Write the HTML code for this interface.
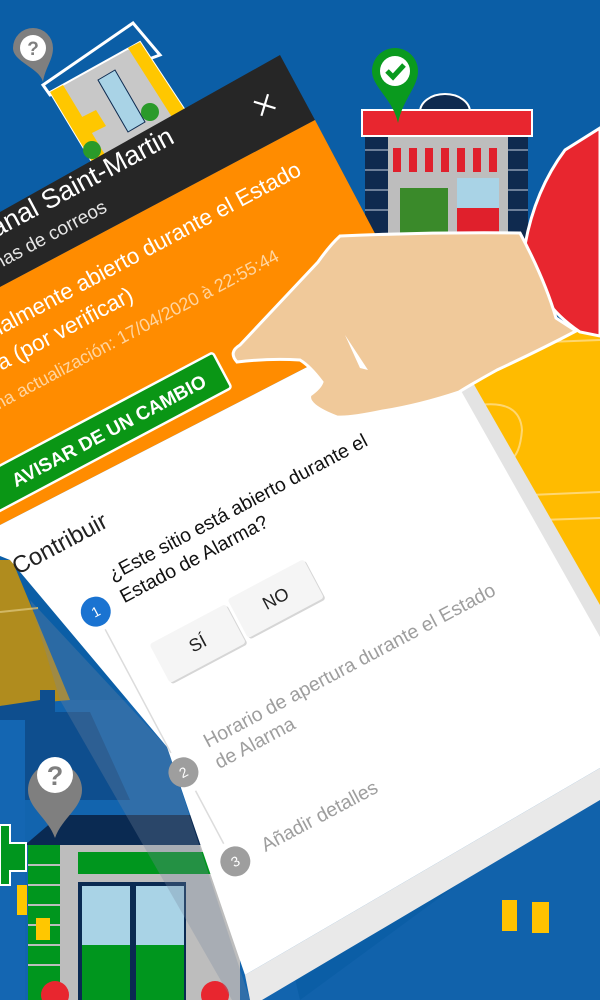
<!DOCTYPE html>
<html><head><meta charset="utf-8"><style>
html,body{margin:0;padding:0;background:#0b5ea6;}
svg{display:block;font-family:"Liberation Sans",Arial,sans-serif;}
</style></head><body>
<svg width="600" height="1000" viewBox="0 0 600 1000" xmlns="http://www.w3.org/2000/svg">
<rect width="600" height="1000" fill="#0b5ea6"/>
<polygon points="0,700 230,700 300,1000 0,1000" fill="#1264ae"/>
<polygon points="300,1000 600,780 600,1000" fill="#1162ab"/>
<polygon points="0,560 12,560 70,700 0,706" fill="#b08c1e"/>
<polyline points="0,612 38,608" stroke="#d2b865" stroke-width="2" fill="none"/>
<polygon points="0,706 40,700 40,690 55,690 55,712 90,712 130,800 0,800" fill="#0e4e8e"/>
<polygon points="0,720 25,720 25,1000 0,1000" fill="#1466b2"/>
<polygon points="430,340 600,322 600,660 430,340" fill="#ffbb00"/>
<polyline points="470,345 600,340" stroke="#ffd770" stroke-width="2" fill="none"/>
<polyline points="530,495 600,492" stroke="#ffd770" stroke-width="2" fill="none"/>
<polyline points="540,520 600,518" stroke="#ffd770" stroke-width="2" fill="none"/>
<path d="M480,405 Q520,400 522,430 Q520,455 510,460" stroke="#ffd770" stroke-width="2" fill="none"/>
<rect x="502" y="900" width="15" height="31" fill="#ffc200"/>
<rect x="532" y="902" width="17" height="31" fill="#ffc200"/>
<!-- post office -->
<polygon points="43,85 133,23 160,55 50,95" fill="#0b5ea6" stroke="#fff" stroke-width="3"/>
<polygon points="50,92 140,42 190,118 100,175" fill="#c8c8c8" stroke="#fff" stroke-width="2"/>
<polygon points="50,92 63,85 113,168 100,175" fill="#ffc700"/>
<polygon points="128,48 140,42 190,118 177,125" fill="#ffc700"/>
<polygon points="98,80 115,70 145,122 128,132" fill="#a9d3e6" stroke="#0d2a50" stroke-width="1"/>
<polygon points="80,118 96,110 106,126 90,134" fill="#ffc700"/>
<circle cx="92" cy="150" r="9" fill="#2a9a2a"/><circle cx="150" cy="112" r="9" fill="#2a9a2a"/>
<path d="M33,28 a20,20 0 0 1 20,20 c0,12 -8,20 -10,34 c-3,-14 -30,-20 -30,-34 a20,20 0 0 1 20,-20z" fill="#7f7f7f"/>
<circle cx="33" cy="48" r="13" fill="#fff"/>
<text x="33" y="55" font-size="19" font-weight="bold" fill="#7f7f7f" text-anchor="middle">?</text>
<!-- shop -->
<path d="M420,112 a25,18 0 0 1 50,0z" fill="#0f2a4f" stroke="#fff" stroke-width="2"/>
<rect x="365" y="134" width="163" height="110" fill="#0f2a4f"/>
<g stroke="#6d7f99" stroke-width="2"><line x1="365" y1="150" x2="388" y2="150"/><line x1="365" y1="170" x2="388" y2="170"/><line x1="365" y1="190" x2="388" y2="190"/><line x1="365" y1="210" x2="388" y2="210"/><line x1="508" y1="150" x2="528" y2="150"/><line x1="508" y1="170" x2="528" y2="170"/><line x1="508" y1="190" x2="528" y2="190"/><line x1="508" y1="210" x2="528" y2="210"/></g>
<rect x="388" y="134" width="120" height="110" fill="#bdbdbd"/>
<g fill="#e0202c"><rect x="393" y="148" width="8" height="24"/><rect x="409" y="148" width="8" height="24"/><rect x="425" y="148" width="8" height="24"/><rect x="441" y="148" width="8" height="24"/><rect x="457" y="148" width="8" height="24"/><rect x="473" y="148" width="8" height="24"/><rect x="489" y="148" width="8" height="24"/></g>
<rect x="400" y="188" width="48" height="50" fill="#3a8a2a"/>
<rect x="457" y="178" width="42" height="62" fill="#e0202c"/>
<rect x="457" y="178" width="42" height="30" fill="#a9d3e6"/>
<rect x="362" y="110" width="170" height="26" fill="#e8262f" stroke="#fff" stroke-width="2"/>
<path d="M395,48 a23,23 0 0 1 23,23 c0,16 -15,28 -20,52 c-5,-24 -26,-36 -26,-52 a23,23 0 0 1 23,-23z" fill="#0a9a1e"/>
<circle cx="395" cy="71" r="15" fill="#fff"/>
<path d="M387,71 l6,6 l11,-12" stroke="#0a9a1e" stroke-width="5" fill="none"/>
<path d="M600,128 L565,150 Q535,190 525,245 Q532,300 580,332 L600,336 Z" fill="#e8262f" stroke="#fff" stroke-width="3"/>
<!-- pharmacy -->
<polygon points="25,845 60,815 220,815 240,845" fill="#0a2a52"/>
<rect x="28" y="845" width="212" height="160" fill="#bdbdbd"/>
<rect x="28" y="845" width="32" height="160" fill="#00961e"/>
<g stroke="#bdbdbd" stroke-width="2"><line x1="28" y1="865" x2="60" y2="865"/><line x1="28" y1="885" x2="60" y2="885"/><line x1="28" y1="905" x2="60" y2="905"/><line x1="28" y1="925" x2="60" y2="925"/><line x1="28" y1="945" x2="60" y2="945"/><line x1="28" y1="965" x2="60" y2="965"/></g>
<rect x="78" y="852" width="160" height="22" fill="#00961e"/>
<rect x="78" y="882" width="108" height="120" fill="#0a2a52"/>
<rect x="82" y="886" width="48" height="116" fill="#a9d3e6"/><rect x="136" y="886" width="48" height="116" fill="#a9d3e6"/>
<rect x="82" y="945" width="48" height="57" fill="#00961e"/><rect x="136" y="945" width="48" height="57" fill="#00961e"/>
<rect x="36" y="918" width="14" height="22" fill="#ffc700"/>
<rect x="17" y="885" width="10" height="30" fill="#ffc700"/>
<path d="M0,825 h10 v18 h16 v28 h-16 v14 h-10z" fill="#00961e" stroke="#fff" stroke-width="2"/>
<circle cx="55" cy="995" r="14" fill="#e8262f"/><circle cx="215" cy="995" r="14" fill="#e8262f"/>
<path d="M55,763 a27,27 0 0 1 27,27 c0,18 -20,28 -27,48 c-7,-20 -27,-30 -27,-48 a27,27 0 0 1 27,-27z" fill="#7f7f7f"/>
<circle cx="55" cy="775" r="18" fill="#fff"/>
<text x="55" y="785" font-size="27" font-weight="bold" fill="#7f7f7f" text-anchor="middle">?</text>
<!-- card -->
<polygon points="245,975 600,768 600,800 262,1000 250,1000" fill="#e9e9e9"/>
<polygon points="416,311 432,311 600,605 600,640" fill="#e3e3e3"/>
<polygon points="30,600 167,747 250,1000 232,1000 60,700" fill="rgba(120,135,160,0.3)"/>
<polygon points="0,212 280,55 315,120 0,287" fill="#262626"/>
<polygon points="0,287 315,120 416,311 0,525" fill="#ff8c00"/>
<polygon points="0,525 416,311 600,637 600,768 245,975 167,747 10,560 0,556" fill="#ffffff"/>
<g transform="translate(280,55) rotate(-28)">
  <text x="-133" y="28" font-size="27" fill="#fff" text-anchor="end">Canal Saint-Martin</text>
  <text x="-225" y="57" font-size="19" fill="#e6e6e6" text-anchor="end">Oficinas de correos</text>
  <g stroke="#fff" stroke-width="2.2"><line x1="-45" y1="29" x2="-29" y2="45"/><line x1="-29" y1="29" x2="-45" y2="45"/></g>
  <text x="-36" y="116" font-size="22.5" fill="#fff" text-anchor="end">Potencialmente abierto durante el Estado</text>
  <text x="-243" y="148" font-size="22.5" fill="#fff" text-anchor="end">de Alarma (por verificar)</text>
  <text x="-96" y="181" font-size="18" fill="#ffd5a0" text-anchor="end">Última actualización: 17/04/2020 à 22:55:44</text>
  <rect x="-466" y="231" width="267" height="40" rx="3" fill="#0a9615" stroke="#fff" stroke-width="2.5"/>
  <text x="-219" y="258" font-size="19" font-weight="bold" fill="#fff" text-anchor="end">AVISAR DE UN CAMBIO</text>
  <text x="-476" y="336" font-size="24" fill="#222">Contribuir</text>
  <text x="-395" y="386" font-size="19.5" fill="#111">¿Este sitio está abierto durante el</text>
  <text x="-395" y="411" font-size="19.5" fill="#111">Estado de Alarma?</text>
  <circle cx="-424" cy="405" r="15" fill="#1a73d1"/>
  <text x="-424" y="410" font-size="14" fill="#fff" text-anchor="middle">1</text>
  <line x1="-424" y1="425" x2="-424" y2="565" stroke="#dcdcdc" stroke-width="1.5"/>
  <rect x="-391" y="461" width="86" height="44" rx="3" fill="#d6d6d6"/>
  <rect x="-392" y="459" width="86" height="44" rx="3" fill="#f5f5f5"/>
  <text x="-349" y="487" font-size="18" fill="#222" text-anchor="middle">SÍ</text>
  <rect x="-301" y="458" width="86" height="44" rx="3" fill="#d6d6d6"/>
  <rect x="-302" y="456" width="86" height="44" rx="3" fill="#f5f5f5"/>
  <text x="-259" y="484" font-size="18" fill="#222" text-anchor="middle">NO</text>
  <circle cx="-422" cy="588" r="15" fill="#9e9e9e"/>
  <text x="-422" y="593" font-size="14" fill="#fff" text-anchor="middle">2</text>
  <text x="-389" y="578" font-size="19.5" fill="#9e9e9e">Horario de apertura durante el Estado</text>
  <text x="-389" y="602" font-size="19.5" fill="#9e9e9e">de Alarma</text>
  <line x1="-420" y1="610" x2="-420" y2="670" stroke="#dcdcdc" stroke-width="1.5"/>
  <circle cx="-418" cy="691" r="15" fill="#9e9e9e"/>
  <text x="-418" y="696" font-size="14" fill="#fff" text-anchor="middle">3</text>
  <text x="-387" y="697" font-size="19.5" fill="#9e9e9e">Añadir detalles</text>
</g>
<!-- hand -->
<path d="M237,362 Q228,352 240,345 L318,262 Q330,245 340,236 Q430,232 520,233 Q545,280 556,318 L576,331 Q540,350 497,370 Q470,385 459,392 Q420,405 383,411 Q350,418 337,417 Q306,405 310,395 Q320,388 322,382 Q310,366 300,360 Q270,358 237,362 Z" fill="#f0c99a" stroke="#fff" stroke-width="3"/>
<path d="M345,335 L360,368 L368,370 Z" fill="#fff"/>
</svg>
</body></html>
